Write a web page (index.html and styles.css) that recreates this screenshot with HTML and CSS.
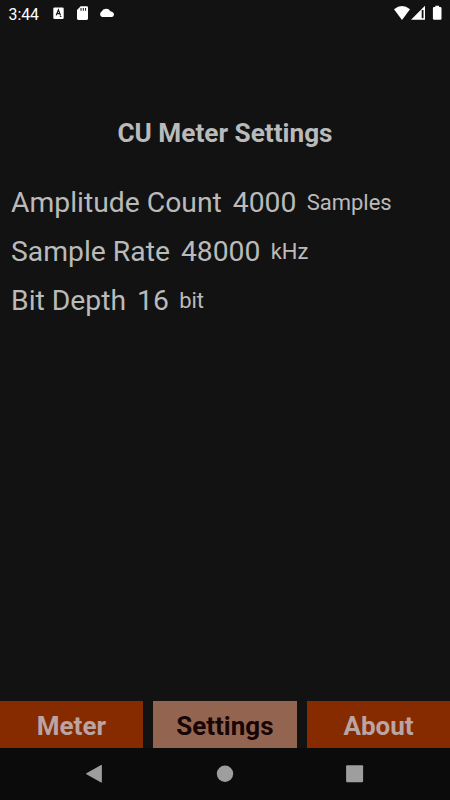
FILE: index.html
```
<!DOCTYPE html>
<html lang="en">
<head>
<meta charset="utf-8">
<title>CU Meter Settings</title>
<link rel="stylesheet" href="styles.css">
</head>
<body>
<div class="screen">
  <header class="status">
    <span class="clock">3:44</span>
    <svg class="notices" width="64" height="20" viewBox="0 0 64 20">
      <rect x="1.3" y="3.6" width="10.4" height="11.4" rx="1.2" fill="#fff"/>
      <path d="M4.2 11.4 6.4 5.8 8.5 11.4M5 9.6H7.8" fill="none" stroke="#121212" stroke-width="1.2"/>
      <path d="M7.8 12.4H9.4" stroke="#121212"/>
      <path d="M28.7 2.3H34.7Q36 2.3 36 3.6V14.6Q36 15.9 34.7 15.9H26.3Q25 15.9 25 14.6V6Z" fill="#fff"/>
      <path d="M29 4V6.8M31.3 4V6.8M33.6 4V6.8" stroke="#121212" stroke-width="1"/>
      <path d="M50 13A3 3 0 0 1 49.6 7.6A5 5 0 0 1 58.4 7.2Q62 8 62 10.8Q61.7 13 59.6 13Z" fill="#fff"/>
    </svg>
    <svg class="signals" width="50" height="20" viewBox="0 0 50 20">
      <path d="M2 5.2Q10-1.4 18 5.2L10 16Z" fill="#fff"/>
      <path d="M33 1.8V15.8H19Z" fill="#fff"/>
      <path d="M30.6 6V14.2" stroke="#121212" stroke-width="1.8"/>
      <path d="M43.3 1.8H47.1V3.1H48.3Q49.5 3.1 49.5 4.3V14.6Q49.5 15.8 48.3 15.8H42.1Q40.9 15.8 40.9 14.6V4.3Q40.9 3.1 42.1 3.1H43.3Z" fill="#fff"/>
    </svg>
  </header>
  <main class="content">
    <h1 class="title">CU Meter Settings</h1>
    <div class="setting"><span>Amplitude Count</span><span>4000</span><span class="unit">Samples</span></div>
    <div class="setting"><span>Sample Rate</span><span>48000</span><span class="unit">kHz</span></div>
    <div class="setting"><span>Bit Depth</span><span>16</span><span class="unit">bit</span></div>
  </main>
  <nav class="tabs">
    <button class="tab">Meter</button>
    <button class="tab active">Settings</button>
    <button class="tab">About</button>
  </nav>
  <footer class="system-nav">
    <svg width="20" height="20" viewBox="0 0 20 20"><path d="M16.9 1.6V18Q16.9 18.8 16.1 18.5L1.4 10.3Q.7 9.8 1.4 9.3L16.1 1.1Q16.9.8 16.9 1.6Z"/></svg>
    <svg width="20" height="20" viewBox="0 0 20 20"><circle cx="10" cy="9.8" r="8.2"/></svg>
    <svg width="20" height="20" viewBox="0 0 20 20"><rect x="1.1" y="1.2" width="17" height="17" rx="1"/></svg>
  </footer>
</div>
</body>
</html>
```
FILE: styles.css
```
* { box-sizing: border-box; }
body { margin: 0; background: #121212; font-family: Roboto, sans-serif; }
.screen { width: 450px; height: 800px; display: flex; flex-direction: column; overflow: hidden; }
.status { height: 28px; flex: none; display: flex; align-items: flex-start; padding: 4px 8px 0 8.5px; color: #fff; }
.clock { width: 43.5px; font-size: 15.8px; line-height: 21px; }
.signals { margin-left: auto; }
.content { flex: 1; padding: 85px 11px 0; color: #bababa; }
.title { margin: 0 0 25px; font-size: 26.2px; line-height: 40px; font-weight: 700; text-align: center; }
.setting { display: flex; align-items: center; gap: 11px; height: 49px; font-size: 28.3px; white-space: nowrap; }
.unit { font-size: 22px; margin-left: -0.8px; }
.tabs { display: grid; grid-template-columns: 142.8px 143.4px 1fr; gap: 10.4px; height: 47px; flex: none; }
.tab { border: 0; padding: 2px 0 0; background: #862b00; color: #bba4a3; font: 700 26px Roboto, sans-serif; }
.tab.active { background: #936551; color: #160504; }
.system-nav { height: 52px; flex: none; background: #0b0b0b; display: flex; justify-content: center; gap: 110px; padding-top: 16px; }
.system-nav svg { fill: #9e9e9e; }
```
